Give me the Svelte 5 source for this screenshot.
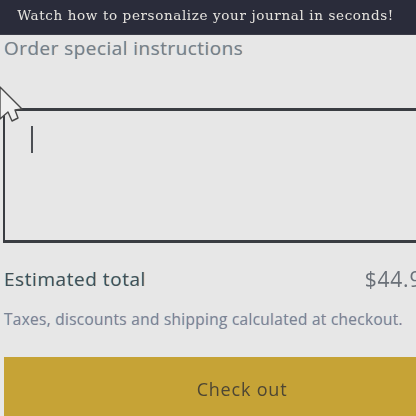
<script>
  let total = "$44.95";
</script>

<div class="page">
  <div class="banner">Watch how to personalize your journal in seconds!</div>
  <div class="cart">
    <label class="label" for="note">Order special instructions</label>
    <div class="note" id="note"><span class="caret"></span></div>
    <div class="totals">
      <span class="totals-name">Estimated total</span>
      <span class="totals-value">{total}</span>
    </div>
    <p class="tax">Taxes, discounts and shipping calculated at checkout.</p>
    <button class="checkout">Check out</button>
  </div>

  <svg class="pointer" width="26" height="40" viewBox="0 0 26 40">
    <path d="M0 1 L22 23 L15 24 L18 32 L12 35 L8 26 L0 33 Z" fill="#efefef" stroke="#4a4a4a" stroke-width="1.4" stroke-linejoin="round" />
  </svg>
</div>

<style>
  :global(body) {
    margin: 0;
    background: #e7e7e7;
    overflow: hidden;
  }
  .page {
    position: relative;
    width: 416px;
    height: 416px;
    overflow: hidden;
    background: #e7e7e7;
    font-family: "Open Sans", "Noto Sans", sans-serif;
    filter: blur(0.35px);
  }
  .banner {
    height: 35px;
    padding-right: 5px;
    line-height: 31px;
    box-sizing: border-box;
    background: #2a2c3a;
    border-bottom: 1px solid #3a3b47;
    color: #e6e4df;
    font-family: "DejaVu Serif", "Liberation Serif", serif;
    font-size: 13.5px;
    letter-spacing: 0.63px;
    text-align: center;
    white-space: nowrap;
  }
  .cart {
    display: flex;
    flex-direction: column;
    width: 476px;
    margin-left: 4px;
  }
  .label {
    margin-top: 1px;
    font-size: 19px;
    letter-spacing: 0.45px;
    line-height: 24px;
    color: #75808a;
    text-shadow: 0.6px 0 rgba(205, 130, 70, 0.3), -0.6px 0 rgba(70, 150, 205, 0.3);
  }
  .note {
    box-sizing: border-box;
    height: 135px;
    margin: 48px 0 0 -1px;
    padding: 15px 0 0 26px;
    border: 3px solid #3a3d42;
    border-left-width: 2px;
  }
  .caret {
    display: block;
    width: 1.5px;
    height: 27px;
    background: #4c4f54;
  }
  .totals {
    display: flex;
    justify-content: space-between;
    width: 431px;
    margin-top: 22px;
    line-height: 28px;
  }
  .totals-name {
    font-size: 19px;
    letter-spacing: 0.55px;
    color: #3f5059;
    text-shadow: 0.6px 0 rgba(205, 130, 70, 0.3), -0.6px 0 rgba(70, 190, 205, 0.3);
  }
  .totals-value {
    font-size: 21px;
    letter-spacing: 0.8px;
    color: #6a7078;
  }
  .tax {
    margin: 16px 0 0;
    font-size: 15.5px;
    letter-spacing: 0.26px;
    line-height: 20px;
    color: #7c8494;
    white-space: nowrap;
    text-shadow: 0.6px 0 rgba(190, 120, 150, 0.25), -0.6px 0 rgba(80, 170, 200, 0.25);
  }
  .checkout {
    height: 64px;
    margin-top: 28px;
    border: none;
    background: #c6a336;
    color: #4d4634;
    font-family: inherit;
    font-size: 18px;
    letter-spacing: 0.8px;
    padding: 0;
  }
  .pointer {
    position: absolute;
    left: 0;
    top: 86px;
  }
</style>
